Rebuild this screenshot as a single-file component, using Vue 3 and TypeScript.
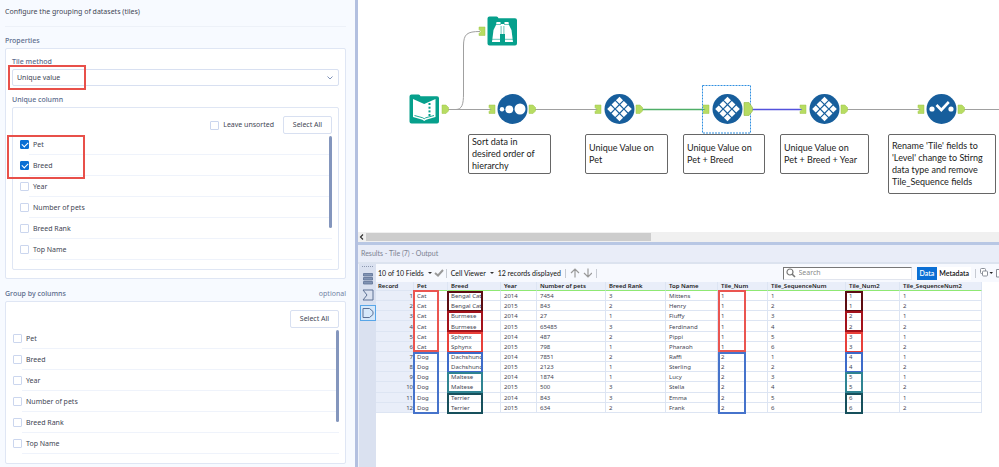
<script setup lang="ts">
import { ref } from 'vue'

interface ColumnField {
  name: string
  checked: boolean
}

interface ToolNode {
  id: string
  kind: 'input' | 'browse' | 'sort' | 'tile' | 'select'
  x: number
  y: number
}

interface Caption {
  x: number
  w: number
  h: number
  lines: string[]
}

interface Marker {
  x: number
  y: number
  w: number
  h: number
  color: string
}

const names = ['Pet', 'Breed', 'Year', 'Number of pets', 'Breed Rank', 'Top Name']
const makeFields = (checked: string[]): ColumnField[] =>
  names.map((name) => ({ name, checked: checked.includes(name) }))

const uniqueFields = ref<ColumnField[]>(makeFields(['Pet', 'Breed']))
const groupFields = ref<ColumnField[]>(makeFields([]))
const leaveUnsorted = ref(false)
const tileMethod = ref('Unique value')
const search = ref('')

function selectAll(fields: ColumnField[]) {
  fields.forEach((field) => (field.checked = true))
}

const nodes: ToolNode[] = [
  { id: 'input', kind: 'input', x: 51, y: 94 },
  { id: 'browse', kind: 'browse', x: 129, y: 16 },
  { id: 'sort', kind: 'sort', x: 139, y: 94 },
  { id: 'tile-1', kind: 'tile', x: 246, y: 94 },
  { id: 'tile-2', kind: 'tile', x: 354, y: 94 },
  { id: 'tile-3', kind: 'tile', x: 451, y: 94 },
  { id: 'select', kind: 'select', x: 568, y: 94 },
]

const lozenges = [0, 1, 2].flatMap((r) => [0, 1, 2].map((c) => ({ x: 6.2 + c * 6.2, y: 6.2 + r * 6.2 })))

const captions: Caption[] = [
  { x: 110, w: 83, h: 40, lines: ['Sort data in', 'desired order of', 'hierarchy'] },
  { x: 227, w: 83, h: 40, lines: ['Unique Value on', 'Pet'] },
  { x: 325, w: 82, h: 40, lines: ['Unique Value on', 'Pet + Breed'] },
  { x: 422, w: 89, h: 40, lines: ['Unique Value on', 'Pet + Breed + Year'] },
  {
    x: 530,
    w: 108,
    h: 60,
    lines: ["Rename 'Tile' fields to", "'Level' change to Stirng", 'data type and remove', 'Tile_Sequence fields'],
  },
]

const anchorsIn = [
  [121, 31],
  [131, 109],
  [237, 109],
  [345, 109],
  [442, 109],
  [560, 109],
]
const anchorsOut = [84, 171, 278, 483, 600]

const columns = [
  'Record', 'Pet', 'Breed', 'Year', 'Number of pets', 'Breed Rank', 'Top Name',
  'Tile_Num', 'Tile_SequenceNum', 'Tile_Num2', 'Tile_SequenceNum2',
]

const rows: (string | number)[][] = [
  [1, 'Cat', 'Bengal Cat', 2014, 7454, 3, 'Mittens', 1, 1, 1, 1],
  [2, 'Cat', 'Bengal Cat', 2015, 843, 2, 'Henry', 1, 2, 1, 2],
  [3, 'Cat', 'Burmese', 2014, 27, 1, 'Fluffy', 1, 3, 2, 1],
  [4, 'Cat', 'Burmese', 2015, 65485, 3, 'Ferdinand', 1, 4, 2, 2],
  [5, 'Cat', 'Sphynx', 2014, 487, 2, 'Pippi', 1, 5, 3, 1],
  [6, 'Cat', 'Sphynx', 2015, 798, 1, 'Pharaoh', 1, 6, 3, 2],
  [7, 'Dog', 'Dachshund', 2014, 7851, 2, 'Raffi', 2, 1, 4, 1],
  [8, 'Dog', 'Dachshund', 2015, 2123, 1, 'Sterling', 2, 2, 4, 2],
  [9, 'Dog', 'Maltese', 2014, 1874, 1, 'Lucy', 2, 3, 5, 1],
  [10, 'Dog', 'Maltese', 2015, 500, 3, 'Stella', 2, 4, 5, 2],
  [11, 'Dog', 'Terrier', 2014, 843, 3, 'Emma', 2, 5, 6, 1],
  [12, 'Dog', 'Terrier', 2015, 634, 2, 'Frank', 2, 6, 6, 2],
]

const pairColors = ['#5c0d12', '#a3121b', '#e8403a', '#3d6bc9', '#2f8492', '#17505c']
const markers: Marker[] = [
  { x: 37, y: 8, w: 26, h: 62, color: '#ea5550' },
  { x: 37, y: 70, w: 26, h: 62, color: '#4673cb' },
  { x: 342, y: 8, w: 28, h: 62, color: '#ea5550' },
  { x: 342, y: 70, w: 28, h: 62, color: '#4673cb' },
  ...pairColors.map((color, i) => ({ x: 71, y: 9 + Math.round(i * 20.3), w: 36, h: 21, color })),
  ...pairColors.map((color, i) => ({ x: 469, y: 9 + Math.round(i * 20.3), w: 18, h: 21, color })),
]
</script>

<template>
  <div class="app">
    <aside class="config">
      <p class="intro">Configure the grouping of datasets (tiles)</p>
      <h2 class="heading">Properties</h2>
      <section class="card">
        <label class="heading" for="tile-method">Tile method</label>
        <div class="select-wrap">
          <select id="tile-method" v-model="tileMethod">
            <option>Unique value</option>
          </select>
          <svg class="chevron" viewBox="0 0 8 6"><path d="M1.5 1.5 4 4 6.5 1.5" fill="none" stroke="#7f92b8" /></svg>
          <span class="mark mark-method"></span>
        </div>
        <h3 class="heading">Unique column</h3>
        <div class="card inner">
          <div class="tools">
            <label class="check"><input v-model="leaveUnsorted" type="checkbox" />Leave unsorted</label>
            <button type="button" @click="selectAll(uniqueFields)">Select All</button>
          </div>
          <ul class="fields">
            <li v-for="field in uniqueFields" :key="field.name">
              <label class="check"><input v-model="field.checked" type="checkbox" />{{ field.name }}</label>
            </li>
            <li class="thumb" aria-hidden="true"></li>
            <li class="mark mark-fields" aria-hidden="true"></li>
          </ul>
        </div>
      </section>
      <div class="group-head">
        <h2 class="heading">Group by columns</h2>
        <span class="optional">optional</span>
      </div>
      <section class="card inner">
        <div class="tools">
          <button type="button" @click="selectAll(groupFields)">Select All</button>
        </div>
        <ul class="fields">
          <li v-for="field in groupFields" :key="field.name">
            <label class="check"><input v-model="field.checked" type="checkbox" />{{ field.name }}</label>
          </li>
          <li class="thumb" aria-hidden="true"></li>
        </ul>
      </section>
    </aside>

    <main class="work">
      <div class="canvas">
        <svg class="wires" width="641" height="232" viewBox="0 0 641 232">
          <g fill="none" stroke="#a0a0a0">
            <path d="M89 109.500H133" />
            <path d="M89 109.500H98C104 109.500 105.500 104 105.500 94V46C105.500 34 109 31.500 122 31.500" />
            <path d="M176 109.500H240M488 109.500H562M605 109.500H641" />
          </g>
          <path d="M283 109.500H347" stroke="#4fae68" stroke-width="1.300" />
          <path d="M393 109.500H445" stroke="#5352dc" stroke-width="1.300" />
          <path
            v-for="(a, i) in anchorsIn"
            :key="i"
            :transform="`translate(${a[0]} ${a[1]})`"
            d="M0-4H6V4.500H0V2.500L2 .5 0-1.500Z"
            fill="#b7dc62"
            stroke="#9fc64a"
            stroke-width=".5"
          />
          <path
            v-for="x in anchorsOut"
            :key="x"
            :transform="`translate(${x} 109)`"
            d="M0-4H4L6.500-1.500V2L4 4.500H0Z"
            fill="#b7dc62"
            stroke="#9fc64a"
            stroke-width=".5"
          />
          <rect x="344.500" y="85.500" width="48" height="47.500" fill="none" stroke="#2f8fe0" stroke-dasharray="2 1" />
          <path d="M386 102.500H391L394.500 107.500V111L391 115.500H386Z" fill="#b7dc62" stroke="#93b944" stroke-width=".6" />
        </svg>

        <svg
          v-for="node in nodes"
          :key="node.id"
          class="node"
          width="31"
          height="31"
          viewBox="0 0 31 31"
          :style="{ left: node.x + 'px', top: node.y + 'px' }"
        >
          <template v-if="node.kind === 'input' || node.kind === 'browse'">
            <path d="M2.500.5H9.500Q11 .5 11.500 2.300H28Q30 2.300 30 4.300V27.500Q30 29.500 28 29.500H2.500Q.5 29.500.5 27.500V2.500Q.5.5 2.500.5Z" fill="#06a08c" />
            <g v-if="node.kind === 'input'">
              <path d="M4 5 15.200 10 26.500 5V23L17 25.700 15.200 27 13.500 25.700 4 23Z" fill="#fff" />
              <path d="M5.500 21.500 13.800 23.800 15.200 24.800 16.700 23.800 25 21.500" fill="none" stroke="#06a08c" stroke-width=".9" />
              <g fill="#06a08c">
                <rect x="19.500" y="9" width="2" height="2" /><rect x="19.500" y="12.700" width="2" height="2" />
                <rect x="19.500" y="16.400" width="2" height="2" /><rect x="19.500" y="20" width="2" height="2" />
              </g>
            </g>
            <g v-else>
              <path d="M9.500 6H13.500V8H17.500V6H21.500L22 9 24.500 14 26 26H18V18H13V26H5L6.500 14 9 9Z" fill="#fff" />
              <path d="M5 23.300H13M18 23.300H26M9 8.500H14M17 8.500H22M14.100 10V18M16.900 10V18" stroke="#06a08c" stroke-width=".6" />
            </g>
          </template>
          <template v-else>
            <circle cx="15.500" cy="15" r="15" fill="#175e9c" />
            <g v-if="node.kind === 'sort'" fill="#fff">
              <circle cx="5" cy="15.300" r="2.200" /><circle cx="12.300" cy="15.300" r="3.900" /><circle cx="23" cy="15" r="5.500" />
            </g>
            <g v-else-if="node.kind === 'tile'" fill="#fff" transform="translate(15.500 15) rotate(45) translate(-14.900 -14.900)">
              <rect v-for="(p, i) in lozenges" :key="i" :x="p.x" :y="p.y" width="5" height="5" />
            </g>
            <g v-else>
              <circle cx="6" cy="15" r="2.600" fill="#fff" /><circle cx="25" cy="15" r="2.600" fill="#fff" />
              <path d="M10.500 11 15.300 16 22.800 8" fill="none" stroke="#fff" stroke-width="2.600" />
            </g>
          </template>
        </svg>

        <div
          v-for="(caption, i) in captions"
          :key="i"
          class="caption"
          :style="{ left: caption.x + 'px', width: caption.w + 'px', height: caption.h + 'px' }"
        >
          <span v-for="line in caption.lines" :key="line">{{ line }}</span>
        </div>
      </div>

      <div class="hscroll">
        <svg width="8" height="10" viewBox="0 0 8 10"><path d="M5 2.500 2.500 5 5 7.500" fill="none" stroke="#333" stroke-width="1.200" /></svg>
        <span class="hthumb"></span>
      </div>

      <section class="results">
        <h2 class="results-title">Results - Tile (7) - Output</h2>
        <div class="results-body">
          <nav class="rail">
            <span class="grip"></span>
            <button type="button" aria-label="Messages">
              <svg width="10" height="12" viewBox="0 0 10 12"><path d="M.5.5h9v2.500h-9zM.5 4.500h9V7h-9zM.5 8.500h9V11h-9z" fill="#8194b4" stroke="#5d7195" stroke-width=".8" /></svg>
            </button>
            <button type="button" aria-label="Input anchor">
              <svg width="12" height="12" viewBox="0 0 12 12"><path d="M1 1H11V11H1L5 6Z" fill="none" stroke="#5d7195" /></svg>
            </button>
            <button type="button" class="active" aria-label="Output anchor">
              <svg width="12" height="12" viewBox="0 0 12 12"><path d="M1 1.500H7.500L11 4.500V7.500L7.500 10.500H1Z" fill="none" stroke="#5d7195" /></svg>
            </button>
          </nav>
          <div class="output">
            <div class="toolbar">
              <button type="button" class="menu">10 of 10 Fields <i></i></button>
              <svg class="tick" width="10" height="8" viewBox="0 0 10 8"><path d="M1 4 4 6.500 9 1" fill="none" stroke="#999" stroke-width="2" /></svg>
              <span class="bar"></span>
              <button type="button" class="menu">Cell Viewer <i></i></button>
              <span class="count">12 records displayed</span>
              <span class="bar"></span>
              <svg width="22" height="10" viewBox="0 0 22 10"><path d="M5 9.500V1.500M1 5 5 1 9 5M18 .5V8.500M14 5 18 9 22 5" fill="none" stroke="#9a9a9a" stroke-width="1.200" /></svg>
              <span class="bar"></span>
              <label class="search">
                <svg width="10" height="10" viewBox="0 0 10 10"><circle cx="4" cy="4" r="3" fill="none" stroke="#777" stroke-width="1.200" /><path d="M6 6 9 9" stroke="#777" stroke-width="1.600" /></svg>
                <input v-model="search" type="text" placeholder="Search" aria-label="Search" />
              </label>
              <div class="tabs">
                <button type="button" class="on">Data</button>
                <button type="button">Metadata</button>
              </div>
              <span class="bar"></span>
              <svg width="19" height="10" viewBox="0 0 19 10"><g fill="#fff" stroke="#8a8f98"><rect x=".5" y=".5" width="5" height="5" rx="1" /><rect x="2.500" y="3" width="5" height="5" rx="1" /><path d="M16.500 1.500H21V9H16.500Z" /></g><path d="M9.500 4H13L11.200 6Z" fill="#222" /></svg>
            </div>
            <div class="grid">
              <table>
                <colgroup><col v-for="(c, i) in columns" :key="c" :class="'c' + i" /></colgroup>
                <thead>
                  <tr><th v-for="c in columns" :key="c" scope="col">{{ c }}</th></tr>
                </thead>
                <tbody>
                  <tr v-for="row in rows" :key="row[0]">
                    <td v-for="(cell, i) in row" :key="i">{{ cell }}</td>
                  </tr>
                </tbody>
              </table>
              <span
                v-for="(m, i) in markers"
                :key="i"
                class="marker"
                :style="{ left: m.x + 'px', top: m.y + 'px', width: m.w + 'px', height: m.h + 'px', borderColor: m.color }"
              ></span>
            </div>
          </div>
        </div>
      </section>
    </main>
  </div>
</template>

<style>
body {
  margin: 0;
}
</style>

<style scoped>
* {
  box-sizing: border-box;
}
.app {
  display: flex;
  min-height: 100vh;
  overflow: hidden;
  background: #fff;
  font-family: 'Noto Sans', 'Open Sans', sans-serif;
  font-size: 7px;
  line-height: 10px;
  color: #3f4654;
}
button,
input,
select {
  font: inherit;
  color: inherit;
  margin: 0;
  padding: 0;
}
button {
  border: 0;
  background: none;
}
svg {
  display: block;
  flex: none;
}
.config {
  flex: 0 0 355px;
  padding: 0 9px 4px 5px;
  background: #f7faff;
}
.intro {
  margin: 0 0 9px;
  padding: 7px 0 9px;
  border-bottom: 1px solid #edf1f8;
}
.heading {
  display: block;
  margin: 0;
  font-size: 7px;
  font-weight: 500;
  line-height: 10px;
  color: #5a6b8c;
}
.card {
  margin-top: 2px;
  padding: 8px 6px;
  border: 1px solid #dfe6f4;
  border-radius: 2px;
  background: #fff;
}
.select-wrap {
  position: relative;
  margin: 2px 0 9px;
}
.select-wrap select {
  display: block;
  appearance: none;
  width: 100%;
  height: 17px;
  padding: 0 4px;
  border: 1px solid #d8e0f1;
  border-radius: 2px;
  background: #fff;
}
.chevron {
  position: absolute;
  right: 5px;
  top: 6px;
  width: 8px;
}
.mark {
  position: absolute;
  border: 2px solid #e8504a;
  pointer-events: none;
}
.mark-method {
  left: -4px;
  top: -4px;
  width: 78px;
  height: 25px;
}
.card.inner {
  padding: 8px 6px 9px 7px;
}
.tools {
  display: flex;
  justify-content: flex-end;
  align-items: center;
  gap: 9px;
}
.tools button {
  width: 49px;
  height: 18px;
  border: 1px solid #d8e0f1;
  border-radius: 2px;
  background: #fff;
}
.fields {
  position: relative;
  margin: 0;
  padding: 0;
  list-style: none;
}
.fields li:not(.thumb):not(.mark) {
  position: relative;
  display: flex;
  height: 21px;
  align-items: center;
}
.fields li:not(.thumb):not(.mark)::after {
  content: '';
  position: absolute;
  left: 9px;
  right: 0;
  bottom: 0;
  height: 1px;
  background: #eff3fb;
}
.check {
  display: flex;
  align-items: center;
  gap: 4px;
}
.check input {
  appearance: none;
  width: 9px;
  height: 9px;
  border: 1px solid #cbd6ee;
  border-radius: 1px;
  background: #fff;
}
.check input:checked {
  border-color: #0b6fd4;
  background: #0b6fd4;
}
.check input:checked::after {
  content: '';
  display: block;
  width: 5px;
  height: 3px;
  margin: 1px;
  border-left: 1px solid #fff;
  border-bottom: 1px solid #fff;
  transform: rotate(-45deg);
}
.thumb {
  position: absolute;
  right: 0;
  top: 2px;
  width: 3px;
  height: 92px;
  border-radius: 2px;
  background: #8496bd;
}
.mark-fields {
  left: -13px;
  top: 1px;
  width: 78px;
  height: 44px;
}
.group-head {
  display: flex;
  justify-content: space-between;
  margin-top: 10px;
}
.optional {
  color: #7383a5;
}
.work {
  display: flex;
  flex: 1;
  min-width: 0;
  flex-direction: column;
  border-left: 3px solid #b3c0e0;
}
.canvas {
  position: relative;
  height: 232px;
  overflow: hidden;
}
.wires,
.node {
  position: absolute;
}
.wires {
  left: 0;
  top: 0;
}
.caption {
  position: absolute;
  top: 134px;
  display: flex;
  flex-direction: column;
  justify-content: center;
  padding-left: 3px;
  border: 1px solid #666;
  border-radius: 2px;
  background: #fff;
  font-family: Lato, 'Open Sans', sans-serif;
  font-size: 9px;
  line-height: 12px;
  color: #222;
  white-space: nowrap;
}
.hscroll {
  display: flex;
  align-items: center;
  height: 10px;
  background: #f0f0f0;
}
.hthumb {
  width: 285px;
  height: 8px;
  background: #cdcdcd;
}
.results {
  display: flex;
  flex: 1;
  flex-direction: column;
  border-top: 3px solid #b8c7e4;
}
.results-title {
  margin: 0;
  padding: 3px;
  border-bottom: 2px solid #dce3ef;
  background: #e9edf8;
  font-family: Lato, 'Open Sans', sans-serif;
  font-size: 7px;
  font-weight: 400;
  line-height: 11px;
  color: #7b8190;
}
.results-body {
  display: flex;
  flex: 1;
}
.rail {
  display: flex;
  flex: 0 0 18px;
  flex-direction: column;
  align-items: center;
  padding: 2px 0;
  border-left: 1px solid #eef2fa;
  background: #dae1f0;
}
.grip {
  width: 11px;
  height: 1px;
  margin-bottom: 4px;
  border-top: 1px dotted #8b97ae;
}
.rail button {
  display: flex;
  align-items: center;
  justify-content: center;
  width: 16px;
  height: 16px;
}
.rail button.active {
  margin-top: 2px;
  border: 1px solid #58a6e8;
  background: #d6e8fa;
}
.output {
  flex: 1;
  min-width: 0;
  overflow: hidden;
}
.toolbar {
  display: flex;
  align-items: center;
  height: 18px;
  padding-left: 2px;
  background: #f7f9fe;
  font-family: Lato, 'Open Sans', sans-serif;
  color: #111;
  white-space: nowrap;
}
.menu {
  display: flex;
  align-items: center;
  gap: 4px;
}
.menu i {
  border: 2px solid transparent;
  border-top-color: #333;
  border-bottom: 0;
}
.tick {
  margin: 0 2px;
}
.bar {
  width: 1px;
  height: 9px;
  margin: 0 4px;
  background: #c6cad2;
}
.tick + .bar {
  margin-left: 0;
}
.count {
  margin-left: 4px;
}
.search {
  display: flex;
  align-items: center;
  gap: 3px;
  width: 129px;
  height: 13px;
  margin-left: auto;
  padding-left: 2px;
  border: 1px solid #e1e5ee;
  border-top-color: #777;
  border-left-color: #777;
  background: #fff;
  font-family: 'Noto Sans', 'Open Sans', sans-serif;
}
.search input {
  flex: 1;
  min-width: 0;
  border: 0;
  outline: 0;
  background: none;
}
.search input::placeholder {
  color: #8a8a8a;
}
.tabs {
  display: flex;
  margin-left: 5px;
}
.tabs button {
  height: 13px;
  padding: 0 2px;
  background: #fff;
  font-weight: 600;
}
.tabs .on {
  padding: 0 3px;
  background: #0b6fd4;
  color: #fff;
}
.grid {
  position: relative;
}
table {
  width: 606px;
  height: 131px;
  border-collapse: separate;
  border-spacing: 0;
  table-layout: fixed;
  font-size: 6px;
  line-height: 7px;
}
th,
td {
  padding: 2px 0 0 3px;
  border-right: 1px solid #dde5f3;
  border-bottom: 1px solid #dde5f3;
  text-align: left;
  white-space: nowrap;
}
th {
  padding-top: 1px;
  border-bottom-color: #8fe873;
  background: #e9eef9;
  font-weight: 600;
  color: #222;
}
th:first-child {
  padding-left: 2px;
  border-bottom-color: #dde5f3;
}
td:first-child {
  background: #e9eef9;
  text-align: right;
}
.c0 { width: 38px; }
.c1 { width: 34px; }
.c2 { width: 53px; }
.c3 { width: 36px; }
.c4 { width: 69px; }
.c5 { width: 60px; }
.c6 { width: 52px; }
.c7 { width: 50px; }
.c8 { width: 78px; }
.c9 { width: 54px; }
.c10 { width: 82px; }
.marker {
  position: absolute;
  border: 2px solid;
}
</style>
